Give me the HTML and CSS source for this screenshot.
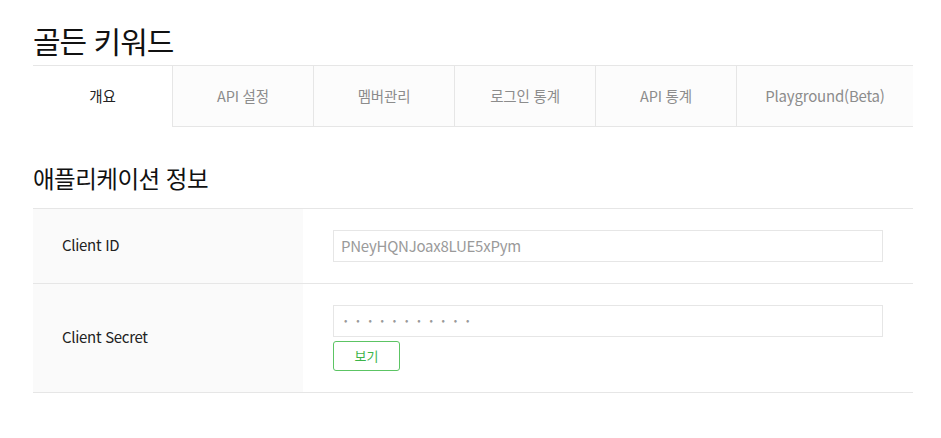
FILE: index.html
```html
<!DOCTYPE html>
<html lang="ko">
<head>
<meta charset="utf-8">
<link rel="stylesheet" href="styles.css">
</head>
<body>
<div class="page">
  <h1 class="title">골든 키워드</h1>
  <ul class="tabs">
    <li class="tab active">개요</li>
    <li class="tab">API 설정</li>
    <li class="tab">멤버관리</li>
    <li class="tab">로그인 통계</li>
    <li class="tab">API 통계</li>
    <li class="tab last">Playground(Beta)</li>
  </ul>
  <h2 class="section">애플리케이션 정보</h2>
  <div class="info">
    <div class="row row-id">
      <div class="label">Client ID</div>
      <div class="value">
        <div class="field">PNeyHQNJoax8LUE5xPym</div>
      </div>
    </div>
    <div class="row row-secret">
      <div class="label">Client Secret</div>
      <div class="value">
        <div class="field dots">•••••••••••</div>
        <button class="btn">보기</button>
      </div>
    </div>
  </div>
</div>
</body>
</html>
```

FILE: styles.css
```css
* { box-sizing: border-box; }
html, body { margin: 0; padding: 0; background: #fff; }
body {
  font-family: "Noto Sans CJK KR", "Noto Sans", sans-serif;
  color: #222;
}
.page {
  width: 880px;
  margin-left: 33px;
}
.title {
  margin: 0;
  padding-top: 20px;
  height: 65px;
  font-size: 30px;
  line-height: 40px;
  font-weight: 400;
  letter-spacing: -1px;
  color: #111;
}
.tabs {
  list-style: none;
  margin: 0;
  padding: 0;
  display: flex;
  border-top: 1px solid #e6e6e6;
}
.tab {
  width: 141px;
  height: 61px;
  display: flex;
  align-items: center;
  justify-content: center;
  padding-bottom: 2px;
  font-size: 14.5px;
  letter-spacing: -0.2px;
  color: #8c8c8c;
  background: #fcfcfc;
  border-left: 1px solid #e6e6e6;
  border-bottom: 1px solid #e6e6e6;
}
.tab.active {
  width: 139px;
  background: #fff;
  color: #222;
  border-left: none;
  border-bottom-color: #fff;
}
.tab.last { flex: 1; font-size: 15px; }
.section {
  margin: 0;
  padding-top: 35px;
  height: 81px;
  font-size: 23.5px;
  line-height: 32px;
  font-weight: 400;
  letter-spacing: -0.5px;
  color: #111;
}
.info {
  border-top: 1px solid #e6e6e6;
}
.row {
  display: flex;
  border-bottom: 1px solid #e6e6e6;
}
.label {
  width: 270px;
  background: #fafafa;
  display: flex;
  align-items: center;
  padding-left: 29px;
  padding-bottom: 3px;
  font-size: 15px;
  letter-spacing: -0.3px;
  color: #222;
}
.value {
  flex: 1;
  padding: 21px 30px 21px 30px;
  display: flex;
  flex-direction: column;
  align-items: flex-start;
  gap: 4px;
}
.field {
  width: 550px;
  height: 32px;
  border: 1px solid #e6e6e6;
  padding: 0 7px 2px;
  display: flex;
  align-items: center;
  font-size: 15px;
  letter-spacing: -0.25px;
  color: #9a9a9a;
}
.field.dots {
  font-size: 10px;
  letter-spacing: 8.8px;
  padding-left: 10px;
  padding-bottom: 3px;
  color: #999;
}
.btn {
  width: 67px;
  height: 30px;
  border: 1px solid #5cc464;
  border-radius: 3px;
  background: #fff;
  color: #3cb449;
  font-family: "Noto Sans CJK KR", sans-serif;
  font-size: 13px;
  padding: 0 0 2px;
}
```
